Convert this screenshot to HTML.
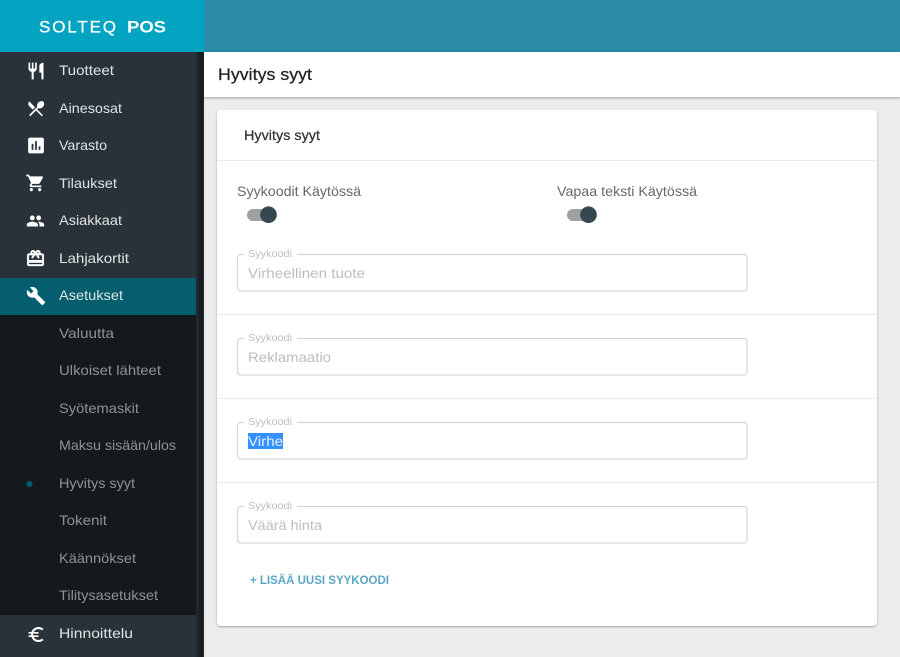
<!DOCTYPE html>
<html><head><meta charset="utf-8">
<style>
html,body{margin:0;padding:0;width:900px;height:657px;overflow:hidden;background:#ececec}
svg{display:block}
text{font-family:"Liberation Sans",sans-serif}
.n{font-size:14px;fill:#e2e4e5}
.s{font-size:14px;fill:#8f9396}
.l{font-size:14px;fill:#63696e}
.f{font-size:10.5px;fill:#bdbdbd}
.v{font-size:14px;fill:#bdbdbd}
.b{fill:#fff;stroke:#d6d6d6;stroke-width:1.2}
</style></head><body>
<svg width="900" height="657" viewBox="0 0 900 657" xmlns="http://www.w3.org/2000/svg">
<defs>
<filter id="sh" x="-5%" y="-5%" width="110%" height="110%"><feDropShadow dx="0" dy="1" stdDeviation="1" flood-color="#000" flood-opacity=".3"/></filter>
<filter id="sh2" x="-5%" y="-20%" width="110%" height="150%"><feDropShadow dx="0" dy="1" stdDeviation="1.2" flood-color="#000" flood-opacity=".35"/></filter>
</defs>
<rect width="900" height="657" fill="#ececec"/>
<rect x="204" y="0" width="696" height="52" fill="#2a8ca8"/>
<rect x="0" y="0" width="204" height="52" fill="#02a4c1"/>
<rect x="0" y="52" width="204" height="605" fill="#283238"/>
<rect x="0" y="278" width="196" height="37" fill="#055e6d"/>
<rect x="0" y="315" width="196" height="300" fill="#14191d"/>
<rect x="196" y="52" width="8" height="605" fill="#1f282c"/>
<rect x="199" y="52" width="4" height="605" fill="#161c20"/>
<text x="39" y="32.5" font-size="17" fill="#fff" stroke="#fff" stroke-width=".3" textLength="77" lengthAdjust="spacing">SOLTEQ</text>
<text x="127" y="32.5" font-size="17" font-weight="700" fill="#fff" textLength="39" lengthAdjust="spacingAndGlyphs">POS</text>

<g fill="#fff">
<svg x="26" y="61" width="20" height="20" viewBox="0 0 24 24"><path d="M11 9H9V2H7v7H5V2H3v7c0 2.12 1.66 3.84 3.75 3.97V22h2.5v-9.03C11.34 12.84 13 11.12 13 9V2h-2v7zm5-3v8h2.5v8H21V2c-2.76 0-5 2.24-5 4z"/></svg>
<svg x="26" y="98.5" width="20" height="20" viewBox="0 0 24 24"><path d="M8.1 13.34l2.83-2.83L3.91 3.5c-1.56 1.56-1.56 4.09 0 5.66l4.19 4.18zm6.78-1.81c1.53.71 3.68.21 5.27-1.38 1.91-1.91 2.28-4.65.81-6.12-1.46-1.46-4.2-1.1-6.12.81-1.59 1.59-2.09 3.74-1.38 5.27L3.7 19.87l1.41 1.41L12 14.41l6.88 6.88 1.41-1.41L13.41 13l1.47-1.47z"/></svg>
<svg x="25.5" y="135" width="21" height="21" viewBox="0 0 24 24"><path d="M19 3H5c-1.1 0-2 .9-2 2v14c0 1.1.9 2 2 2h14c1.1 0 2-.9 2-2V5c0-1.1-.9-2-2-2zM9 17H7v-7h2v7zm4 0h-2V7h2v10zm4 0h-2v-4h2v4z"/></svg>
<svg x="25.5" y="173" width="20" height="20" viewBox="0 0 24 24"><path d="M7 18c-1.1 0-1.99.9-1.99 2S5.9 22 7 22s2-.9 2-2-.9-2-2-2zM1 2v2h2l3.6 7.59-1.35 2.45c-.16.28-.25.61-.25.96 0 1.1.9 2 2 2h12v-2H7.42c-.14 0-.25-.11-.25-.25l.03-.12.9-1.63h7.45c.75 0 1.41-.41 1.75-1.03l3.58-6.49c.08-.14.12-.31.12-.48 0-.55-.45-1-1-1H5.21l-.94-2H1zm16 16c-1.1 0-1.99.9-1.99 2s.89 2 1.99 2 2-.9 2-2-.9-2-2-2z"/></svg>
<svg x="26" y="211.500" width="19" height="19" viewBox="0 0 24 24"><path d="M16 11c1.66 0 2.99-1.34 2.99-3S17.66 5 16 5c-1.66 0-3 1.34-3 3s1.34 3 3 3zm-8 0c1.66 0 2.99-1.34 2.99-3S9.66 5 8 5C6.34 5 5 6.34 5 8s1.34 3 3 3zm0 2c-2.33 0-7 1.17-7 3.5V19h14v-2.5c0-2.33-4.67-3.5-7-3.5zm8 0c-.29 0-.62.02-.97.05 1.16.84 1.97 1.97 1.97 3.45V19h6v-2.5c0-2.33-4.67-3.5-7-3.5z"/></svg>
<svg x="25.500" y="248.500" width="20" height="20" viewBox="0 0 24 24"><path stroke="#fff" stroke-width=".4" d="M20 6h-2.18c.11-.31.18-.65.18-1 0-1.66-1.34-3-3-3-1.05 0-1.96.54-2.5 1.35l-.5.67-.5-.68C10.96 2.54 10.05 2 9 2 7.34 2 6 3.34 6 5c0 .35.07.69.18 1H4c-1.11 0-1.99.89-1.99 2L2 19c0 1.11.89 2 2 2h16c1.11 0 2-.89 2-2V8c0-1.11-.89-2-2-2zm-5-2c.55 0 1 .45 1 1s-.45 1-1 1-1-.45-1-1 .45-1 1-1zM9 4c.55 0 1 .45 1 1s-.45 1-1 1-1-.45-1-1 .45-1 1-1zm11 15H4v-2h16v2zm0-5H4V8h5.08L7 10.83 8.62 12 11 8.76l1-1.36 1 1.36L15.38 12 17 10.83 14.92 8H20v6z"/></svg>
<svg x="26" y="286" width="20" height="20" viewBox="0 0 24 24"><path d="M22.7 19l-9.1-9.1c.9-2.3.4-5-1.5-6.9-2-2-5-2.4-7.4-1.3L9 6 6 9 1.6 4.7C.4 7.1.9 10.1 2.9 12.1c1.9 1.9 4.6 2.4 6.9 1.5l9.1 9.1c.4.4 1 .4 1.4 0l2.3-2.3c.5-.4.5-1.1.1-1.4z"/></svg>
<svg x="26" y="624.500" width="20" height="20" viewBox="0 0 24 24"><path d="M15 18.5c-2.51 0-4.68-1.42-5.76-3.5H15v-2H8.58c-.05-.33-.08-.66-.08-1s.03-.67.08-1H15V9H9.24C10.32 6.92 12.5 5.5 15 5.5c1.61 0 3.09.59 4.23 1.57L21 5.3C19.41 3.87 17.3 3 15 3c-3.92 0-7.24 2.51-8.48 6H3v2h3.06c-.04.33-.06.66-.06 1 0 .34.02.67.06 1H3v2h3.52c1.24 3.49 4.56 6 8.48 6 2.31 0 4.41-.87 6-2.3l-1.78-1.77c-1.13.98-2.6 1.57-4.22 1.57z"/></svg>
</g>

<g>
<text class="n" x="59" y="75" textLength="55" lengthAdjust="spacingAndGlyphs">Tuotteet</text>
<text class="n" x="59" y="113" textLength="63" lengthAdjust="spacingAndGlyphs">Ainesosat</text>
<text class="n" x="59" y="150" textLength="48" lengthAdjust="spacingAndGlyphs">Varasto</text>
<text class="n" x="59" y="188" textLength="58" lengthAdjust="spacingAndGlyphs">Tilaukset</text>
<text class="n" x="59" y="225" textLength="63" lengthAdjust="spacingAndGlyphs">Asiakkaat</text>
<text class="n" x="59" y="263" textLength="70" lengthAdjust="spacingAndGlyphs">Lahjakortit</text>
<text class="n" x="59" y="300" textLength="64" lengthAdjust="spacingAndGlyphs">Asetukset</text>
<text class="s" x="59" y="338" textLength="55" lengthAdjust="spacingAndGlyphs">Valuutta</text>
<text class="s" x="59" y="375" textLength="102" lengthAdjust="spacingAndGlyphs">Ulkoiset lähteet</text>
<text class="s" x="59" y="413" textLength="80" lengthAdjust="spacingAndGlyphs">Syötemaskit</text>
<text class="s" x="59" y="450" textLength="117" lengthAdjust="spacingAndGlyphs">Maksu sisään/ulos</text>
<text class="s" x="59" y="488" textLength="76" lengthAdjust="spacingAndGlyphs">Hyvitys syyt</text>
<text class="s" x="59" y="525" textLength="48" lengthAdjust="spacingAndGlyphs">Tokenit</text>
<text class="s" x="59" y="563" textLength="77" lengthAdjust="spacingAndGlyphs">Käännökset</text>
<text class="s" x="59" y="600" textLength="99" lengthAdjust="spacingAndGlyphs">Tilitysasetukset</text>
<text class="n" x="59" y="638" textLength="74" lengthAdjust="spacingAndGlyphs">Hinnoittelu</text>
</g>
<circle cx="29.500" cy="484" r="3" fill="#055e6d"/>

<rect x="204" y="52" width="696" height="45" fill="#fff" filter="url(#sh2)"/>
<text x="218" y="80" font-size="17" fill="#222" stroke="#222" stroke-width=".25" textLength="94" lengthAdjust="spacingAndGlyphs">Hyvitys syyt</text>

<rect x="217" y="110" width="660" height="516" rx="4" fill="#fff" filter="url(#sh)"/>
<text x="244" y="140" font-size="14" fill="#2f3336" stroke="#2f3336" stroke-width=".25" textLength="76" lengthAdjust="spacingAndGlyphs">Hyvitys syyt</text>
<rect x="217" y="160" width="660" height="1" fill="#ececec"/>
<rect x="217" y="314" width="660" height="1" fill="#ececec"/>
<rect x="217" y="398" width="660" height="1" fill="#ececec"/>
<rect x="217" y="482" width="660" height="1" fill="#ececec"/>

<text class="l" x="237" y="196" textLength="124" lengthAdjust="spacingAndGlyphs">Syykoodit Käytössä</text>
<text class="l" x="557" y="196" textLength="140" lengthAdjust="spacingAndGlyphs">Vapaa teksti Käytössä</text>
<rect x="247" y="209" width="24" height="12" rx="6" fill="#9ba0a3"/>
<circle cx="268.500" cy="214.700" r="8.300" fill="#36474f"/>
<rect x="567" y="209" width="24" height="12" rx="6" fill="#9ba0a3"/>
<circle cx="588.500" cy="214.700" r="8.300" fill="#36474f"/>

<rect class="b" x="237.500" y="254.500" width="509.500" height="36.500" rx="3"/>
<rect x="244" y="250" width="53" height="8" fill="#fff"/>
<text class="f" x="248" y="257" textLength="44" lengthAdjust="spacingAndGlyphs">Syykoodi</text>
<text class="v" x="248" y="278" textLength="117" lengthAdjust="spacingAndGlyphs">Virheellinen tuote</text>

<rect class="b" x="237.500" y="338.500" width="509.500" height="36.500" rx="3"/>
<rect x="244" y="334" width="53" height="8" fill="#fff"/>
<text class="f" x="248" y="341" textLength="44" lengthAdjust="spacingAndGlyphs">Syykoodi</text>
<text class="v" x="248" y="362" textLength="83" lengthAdjust="spacingAndGlyphs">Reklamaatio</text>

<rect class="b" x="237.500" y="422.500" width="509.500" height="36.500" rx="3"/>
<rect x="244" y="418" width="53" height="8" fill="#fff"/>
<text class="f" x="248" y="425" textLength="44" lengthAdjust="spacingAndGlyphs">Syykoodi</text>
<rect x="248" y="433" width="35" height="16" fill="#3390ff"/>
<text x="248" y="446" font-size="14" fill="#e8f1ff" textLength="35" lengthAdjust="spacingAndGlyphs">Virhe</text>

<rect class="b" x="237.500" y="506.500" width="509.500" height="36.500" rx="3"/>
<rect x="244" y="502" width="53" height="8" fill="#fff"/>
<text class="f" x="248" y="509" textLength="44" lengthAdjust="spacingAndGlyphs">Syykoodi</text>
<text class="v" x="248" y="530" textLength="74" lengthAdjust="spacingAndGlyphs">Väärä hinta</text>

<text x="250" y="584" font-size="12" font-weight="700" fill="#5ba6c6" textLength="139" lengthAdjust="spacingAndGlyphs">+ LISÄÄ UUSI SYYKOODI</text>
</svg>
</body></html>
